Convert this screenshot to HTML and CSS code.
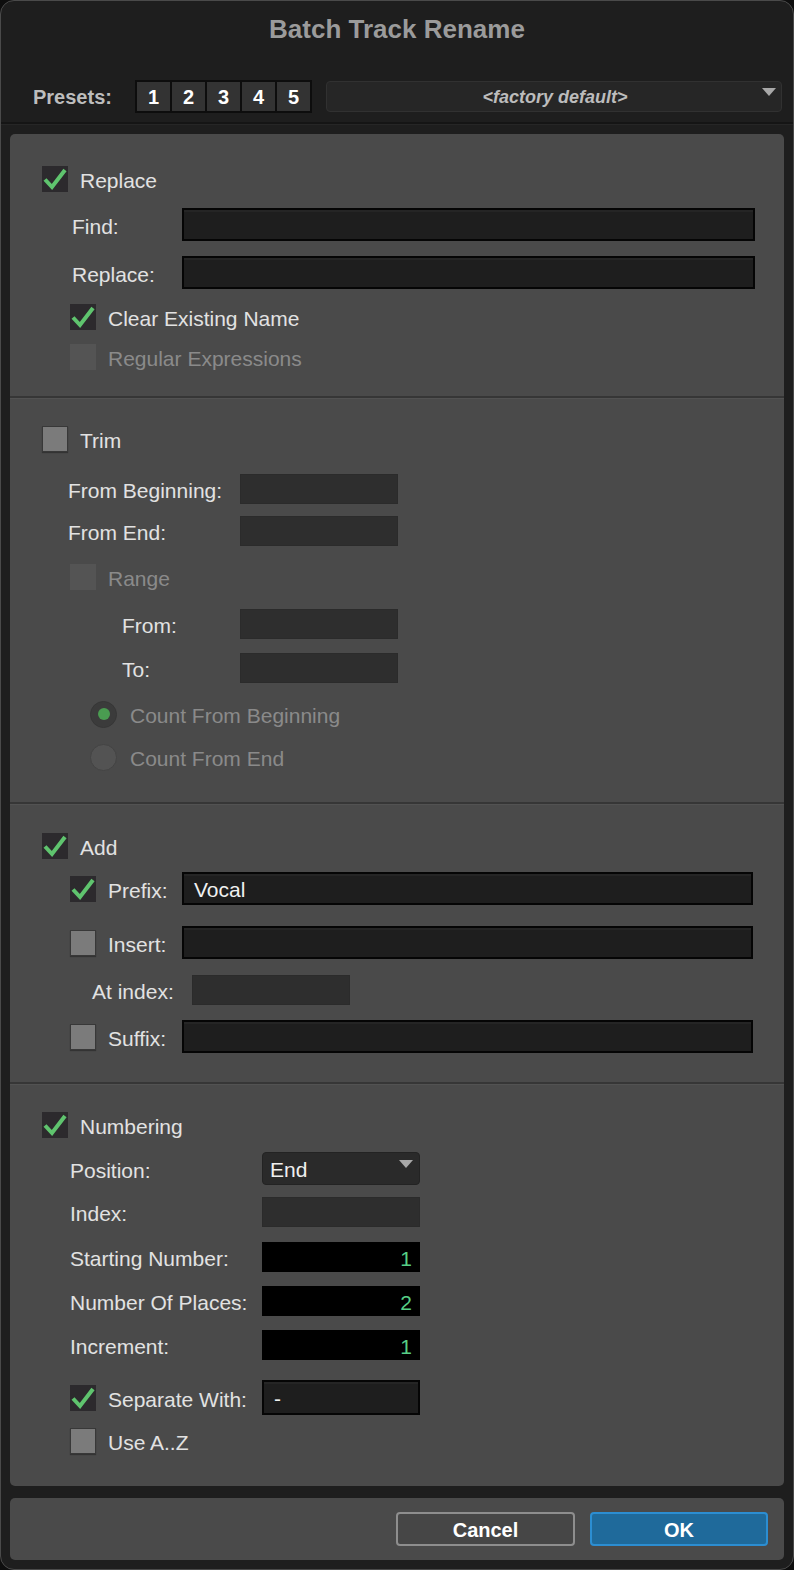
FILE: index.html
```html
<!DOCTYPE html>
<html>
<head>
<meta charset="utf-8">
<title>Batch Track Rename</title>
<link rel="stylesheet" href="styles.css">
</head>
<body>
<div class="window">
  <header class="hdr">
    <div class="title">Batch Track Rename</div>
    <div class="presets">
      <span class="presets-label">Presets:</span>
      <div class="preset-btns">
        <span class="pbtn">1</span><span class="pbtn">2</span><span class="pbtn">3</span><span class="pbtn">4</span><span class="pbtn">5</span>
      </div>
      <div class="preset-select">
        <span class="ps-text">&lt;factory default&gt;</span>
        <svg class="tri tri-preset" viewBox="0 0 14 8"><path d="M0 0H14L7 8Z" fill="#a8a8a8"/></svg>
      </div>
    </div>
  </header>

  <main class="panel">
    <!-- Replace -->
    <section class="sec sec-1">
      <div class="row h26 lvl1">
        <span class="cb cb-on"><svg viewBox="0 0 26 26"><path d="M3 13.5 L10 21 L23 4" fill="none" stroke="#5fc46e" stroke-width="4"/></svg></span>
        <span class="lbl">Replace</span>
      </div>
      <div class="row h33 mt16 ind-find">
        <span class="lbl w-find">Find:</span>
        <div class="field field-dark w-wide"></div>
      </div>
      <div class="row h33 mt15 ind-find">
        <span class="lbl w-find">Replace:</span>
        <div class="field field-dark w-wide"></div>
      </div>
      <div class="row h26 mt15 lvl2">
        <span class="cb cb-on"><svg viewBox="0 0 26 26"><path d="M3 13.5 L10 21 L23 4" fill="none" stroke="#5fc46e" stroke-width="4"/></svg></span>
        <span class="lbl">Clear Existing Name</span>
      </div>
      <div class="row h26 mt14 lvl2">
        <span class="cb cb-dis"></span>
        <span class="lbl dim">Regular Expressions</span>
      </div>
    </section>

    <!-- Trim -->
    <section class="sec sec-2">
      <div class="row h26 lvl1">
        <span class="cb cb-off"></span>
        <span class="lbl">Trim</span>
      </div>
      <div class="row h30 mt22 ind-trim">
        <span class="lbl w-trim">From Beginning:</span>
        <div class="field field-grey w-short"></div>
      </div>
      <div class="row h30 mt12 ind-trim">
        <span class="lbl w-trim">From End:</span>
        <div class="field field-grey w-short"></div>
      </div>
      <div class="row h26 mt18 lvl2">
        <span class="cb cb-dis"></span>
        <span class="lbl dim">Range</span>
      </div>
      <div class="row h30 mt19 ind-range">
        <span class="lbl w-range">From:</span>
        <div class="field field-grey w-short"></div>
      </div>
      <div class="row h30 mt14 ind-range">
        <span class="lbl w-range">To:</span>
        <div class="field field-grey w-short"></div>
      </div>
      <div class="row h26 mt18 ind-radio">
        <span class="radio radio-on"><span class="dot"></span></span>
        <span class="lbl dim">Count From Beginning</span>
      </div>
      <div class="row h26 mt17 ind-radio">
        <span class="radio radio-off"></span>
        <span class="lbl dim">Count From End</span>
      </div>
    </section>

    <!-- Add -->
    <section class="sec sec-3">
      <div class="row h26 lvl1">
        <span class="cb cb-on"><svg viewBox="0 0 26 26"><path d="M3 13.5 L10 21 L23 4" fill="none" stroke="#5fc46e" stroke-width="4"/></svg></span>
        <span class="lbl">Add</span>
      </div>
      <div class="row h33 mt13 lvl2">
        <span class="cb cb-on"><svg viewBox="0 0 26 26"><path d="M3 13.5 L10 21 L23 4" fill="none" stroke="#5fc46e" stroke-width="4"/></svg></span>
        <span class="lbl w-add">Prefix:</span>
        <div class="field field-dark w-wide2"><span class="val">Vocal</span></div>
      </div>
      <div class="row h33 mt21 lvl2">
        <span class="cb cb-off"></span>
        <span class="lbl w-add">Insert:</span>
        <div class="field field-dark w-wide2"></div>
      </div>
      <div class="row h30 mt16 ind-at">
        <span class="lbl w-at">At index:</span>
        <div class="field field-grey w-short"></div>
      </div>
      <div class="row h33 mt15 lvl2">
        <span class="cb cb-off"></span>
        <span class="lbl w-add">Suffix:</span>
        <div class="field field-dark w-wide2"></div>
      </div>
    </section>

    <!-- Numbering -->
    <section class="sec sec-4">
      <div class="row h26 lvl1">
        <span class="cb cb-on"><svg viewBox="0 0 26 26"><path d="M3 13.5 L10 21 L23 4" fill="none" stroke="#5fc46e" stroke-width="4"/></svg></span>
        <span class="lbl">Numbering</span>
      </div>
      <div class="row h33 mt14 ind-num">
        <span class="lbl w-num">Position:</span>
        <div class="select w-short">
          <span class="val">End</span>
          <svg class="tri tri-pos" viewBox="0 0 14 8"><path d="M0 0H14L7 8Z" fill="#a8a8a8"/></svg>
        </div>
      </div>
      <div class="row h30 mt12 ind-num">
        <span class="lbl w-num">Index:</span>
        <div class="field field-grey w-short"></div>
      </div>
      <div class="row h30 mt15 ind-num">
        <span class="lbl w-num">Starting Number:</span>
        <div class="field field-num w-short"><span class="num">1</span></div>
      </div>
      <div class="row h30 mt14 ind-num">
        <span class="lbl w-num">Number Of Places:</span>
        <div class="field field-num w-short"><span class="num">2</span></div>
      </div>
      <div class="row h30 mt14 ind-num">
        <span class="lbl w-num">Increment:</span>
        <div class="field field-num w-short"><span class="num">1</span></div>
      </div>
      <div class="row h35 mt20 lvl2">
        <span class="cb cb-on"><svg viewBox="0 0 26 26"><path d="M3 13.5 L10 21 L23 4" fill="none" stroke="#5fc46e" stroke-width="4"/></svg></span>
        <span class="lbl w-sep">Separate With:</span>
        <div class="field field-dark w-short"><span class="val">-</span></div>
      </div>
      <div class="row h26 mt13 lvl2">
        <span class="cb cb-off"></span>
        <span class="lbl">Use A..Z</span>
      </div>
    </section>
  </main>

  <footer class="footer">
    <button class="btn btn-cancel">Cancel</button>
    <button class="btn btn-ok">OK</button>
  </footer>
</div>
</body>
</html>
```

FILE: styles.css
```css
* { box-sizing: border-box; }

html, body {
  margin: 0;
  padding: 0;
  background: #0e0e0e;
}

body {
  font-family: "Liberation Sans", Arial, sans-serif;
  color: #e4e4e4;
}

.window {
  width: 794px;
  height: 1570px;
  background: #1e1e1e;
  border: 1px solid #4a4a4a;
  border-radius: 14px;
  padding: 0 9px;
  display: flex;
  flex-direction: column;
  overflow: hidden;
}

/* Header */
.hdr {
  margin: 0 -9px;
  padding: 0 0 9px 32px;
  border-bottom: 2px solid #151515;
  box-shadow: 0 1px 0 #262626;
}

.title {
  height: 52px;
  line-height: 52px;
  padding-top: 2px;
  text-align: center;
  margin-left: -32px;
  font-size: 26px;
  font-weight: bold;
  color: #9b9b9b;
}

.presets {
  margin-top: 27px;
  height: 33px;
  display: flex;
  align-items: center;
}

.presets-label {
  width: 80px;
  font-size: 20px;
  font-weight: bold;
  color: #bdbdbd;
  white-space: nowrap;
  padding-top: 2px;
}

.preset-btns {
  margin-left: 22px;
  display: flex;
  gap: 2px;
  padding: 2px;
  background: #0d0d0d;
  height: 33px;
}

.pbtn {
  width: 33px;
  height: 29px;
  background: #333333;
  color: #ffffff;
  font-size: 20px;
  font-weight: bold;
  display: flex;
  align-items: center;
  justify-content: center;
  padding-top: 2px;
}

.preset-select {
  margin-left: 14px;
  width: 456px;
  height: 31px;
  background: #262626;
  border: 1px solid #313131;
  border-radius: 4px;
  position: relative;
  display: flex;
  align-items: center;
  justify-content: center;
}

.ps-text {
  font-size: 18px;
  font-weight: bold;
  font-style: italic;
  color: #bcbcbc;
  margin-left: 2px;
  padding-top: 2px;
}

.tri {
  position: absolute;
  width: 14px;
  height: 8px;
}

.tri-preset { right: 5px; top: 6px; }
.tri-pos { right: 6px; top: 7px; }

/* Main panel */
.panel {
  margin-top: 10px;
  width: 774px;
  background: #4a4a4a;
  border-radius: 5px;
}

.sec-1 { padding: 32px 0 26px; }
.sec-2 { padding: 28px 0 32px; }
.sec-3 { padding: 29px 0 29px; }
.sec-4 { padding: 28px 0 32px; }

.sec + .sec {
  border-top: 2px solid #363636;
  box-shadow: inset 0 1px 0 #525252;
}

.row {
  display: flex;
  align-items: center;
}

.h26 { height: 26px; }
.h30 { height: 30px; }
.h33 { height: 33px; }
.h35 { height: 35px; }

.mt12 { margin-top: 12px; }
.mt13 { margin-top: 13px; }
.mt14 { margin-top: 14px; }
.mt15 { margin-top: 15px; }
.mt16 { margin-top: 16px; }
.mt17 { margin-top: 17px; }
.mt18 { margin-top: 18px; }
.mt19 { margin-top: 19px; }
.mt20 { margin-top: 20px; }
.mt21 { margin-top: 21px; }
.mt22 { margin-top: 22px; }

.lvl1 { padding-left: 32px; }
.lvl2 { padding-left: 60px; }
.ind-find { padding-left: 62px; }
.ind-trim { padding-left: 58px; }
.ind-range { padding-left: 112px; }
.ind-radio { padding-left: 80px; }
.ind-at { padding-left: 82px; }
.ind-num { padding-left: 60px; }

.lbl {
  font-size: 21px;
  color: #e2e2e2;
  white-space: nowrap;
  padding-top: 4px;
}

.cb + .lbl { margin-left: 12px; }
.radio + .lbl { margin-left: 13px; }

.lbl.dim { color: #8a8a8a; }

.w-find { width: 110px; flex: none; }
.w-trim { width: 172px; flex: none; }
.w-range { width: 118px; flex: none; }
.w-add { width: 74px; flex: none; }
.w-at { width: 100px; flex: none; }
.w-num { width: 192px; flex: none; }
.w-sep { width: 154px; flex: none; }

/* Checkboxes */
.cb {
  width: 26px;
  height: 26px;
  flex: none;
  display: flex;
  align-items: center;
  justify-content: center;
}

.cb svg { width: 26px; height: 26px; display: block; }

.cb-on {
  background: #2c2a2d;
}

.cb-off::before {
  content: "";
  width: 24px;
  height: 24px;
  background: #7b7b7b;
  border: 1px solid #383838;
  box-shadow: 0 1px 1px rgba(0,0,0,0.3);
}

.cb-dis {
  background: #545454;
}

/* Radios */
.radio {
  width: 27px;
  height: 27px;
  border-radius: 50%;
  flex: none;
  display: flex;
  align-items: center;
  justify-content: center;
}
.radio-on {
  background: #3b3b3b;
  border: 1px solid #363636;
}
.radio-on .dot {
  width: 12px;
  height: 12px;
  border-radius: 50%;
  background: #4a9c51;
}
.radio-off {
  background: #535353;
  border: 1px solid #444444;
}

/* Fields */
.field {
  height: 100%;
  flex: none;
  display: flex;
  align-items: center;
}

.w-wide { width: 573px; }
.w-wide2 { width: 571px; }
.w-short { width: 158px; }

.field-dark {
  background: #1e1e1e;
  border: 2px solid #050505;
  box-shadow: inset 0 2px 0 #252525;
}

.field-grey {
  background: #2e2e2e;
  border: 1px solid #2b2b2b;
}

.field-num {
  background: #000000;
  justify-content: flex-end;
  padding-right: 8px;
}

.val {
  font-size: 21px;
  color: #f0f0f0;
  padding-left: 10px;
  padding-top: 3px;
}

.num {
  font-size: 21px;
  color: #57cf86;
  padding-top: 3px;
}

.select {
  height: 100%;
  position: relative;
  background: #2a2a2a;
  border: 1px solid #232323;
  border-radius: 4px;
  display: flex;
  align-items: center;
}
.select .val { padding-left: 7px; }

/* Footer */
.footer {
  margin-top: 12px;
  height: 62px;
  width: 774px;
  background: #4a4a4a;
  border-radius: 5px;
  display: flex;
  align-items: center;
  justify-content: flex-end;
  gap: 15px;
  padding-right: 16px;
}

.btn {
  width: 179px;
  height: 34px;
  border-radius: 4px;
  font-family: "Liberation Sans", Arial, sans-serif;
  font-size: 20px;
  font-weight: bold;
  color: #ffffff;
  padding: 2px 0 0;
}

.btn-cancel {
  background: #464646;
  border: 2px solid #8e8e8e;
}

.btn-ok {
  width: 178px;
  background: #1f6a9b;
  border: 2px solid #2c8ed2;
}
```
